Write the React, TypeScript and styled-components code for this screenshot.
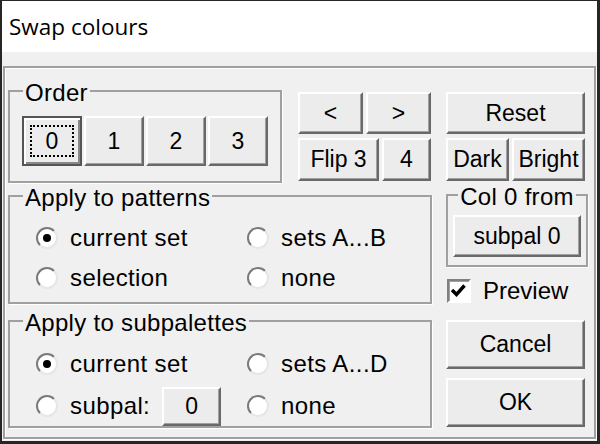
import styled, { createGlobalStyle } from "styled-components";

const GlobalStyle = createGlobalStyle`
  html, body {
    margin: 0;
    padding: 0;
  }
  body {
    width: 600px;
    height: 444px;
    overflow: hidden;
    background: #f0f0f0;
    font-family: "Liberation Sans", Arial, sans-serif;
    color: #000;
  }
`;

const Window = styled.div`
  box-sizing: border-box;
  width: 600px;
  height: 444px;
  display: flex;
  flex-direction: column;
  border-style: solid;
  border-color: #262626;
  border-width: 1px 3px 3px 2px;
  background: #f0f0f0;
`;

const TitleBar = styled.div`
  height: 51px;
  flex: none;
  display: flex;
  align-items: center;
  padding-left: 7px;
  background: #fff;
  font-family: "Open Sans", "Noto Sans", sans-serif;
  font-size: 22.5px;
`;

const Body = styled.div`
  flex: 1;
  display: flex;
  padding: 14px 1px 2px 1px;
`;

const Frame = styled.div`
  flex: 1;
  display: flex;
  gap: 14px;
  padding: 9px 0 0 3px;
  border: 2px solid #a0a0a0;
  box-shadow: 1px 1px 0 #fff, inset 1px 1px 0 #fff;
`;

const LeftCol = styled.div`
  width: 424px;
  display: flex;
  flex-direction: column;
`;

const RightCol = styled.div`
  width: 142px;
  display: flex;
  flex-direction: column;
  margin-top: 15px;
`;

const TopRow = styled.div`
  display: flex;
  align-items: flex-start;
  gap: 16px;
`;

const Group = styled.fieldset<{ $w?: number; $top?: number }>`
  box-sizing: border-box;
  width: ${(p) => (p.$w ? `${p.$w}px` : "100%")};
  min-width: 0;
  margin: ${(p) => p.$top ?? 0}px 0 0 0;
  padding: 0;
  border: 2px solid #a0a0a0;
  box-shadow: 1px 1px 0 #fff;
`;

const Legend = styled.legend<{ $center?: boolean }>`
  font-size: 24px;
  line-height: 24px;
  letter-spacing: 0.3px;
  padding: 4px 2px 0 2px;
  margin: ${(p) => (p.$center ? "0 auto" : "0 0 0 13px")};
`;

const OrderRow = styled.div`
  display: grid;
  grid-template-columns: repeat(4, 60px);
  gap: 2px;
  padding: 11px 12px 15px 12px;
`;

const NavCluster = styled.div`
  width: 133px;
  margin-top: 15px;
  display: flex;
  flex-direction: column;
  gap: 4px;
`;

const BtnRow = styled.div`
  display: flex;
  gap: 3px;
`;

const Button = styled.button<{ $w?: number; $h: number; $default?: boolean }>`
  box-sizing: border-box;
  flex: none;
  width: ${(p) => (p.$w ? `${p.$w}px` : "100%")};
  height: ${(p) => p.$h}px;
  padding: 0;
  display: flex;
  align-items: center;
  justify-content: center;
  background: #ececec;
  font-family: "Liberation Sans", Arial, sans-serif;
  font-size: 23px;
  color: #000;
  border: 2px solid;
  border-color: ${(p) =>
    p.$default ? "#555 #555 #555 #555" : "#fff #696969 #696969 #fff"};
  box-shadow: ${(p) =>
    p.$default
      ? "inset 2px 2px 0 #fff, inset -2px -2px 0 #888"
      : "inset -1px -1px 0 #a0a0a0"};
`;

const FocusRing = styled.span`
  box-sizing: border-box;
  width: 44px;
  height: 32px;
  display: flex;
  align-items: center;
  justify-content: center;
  border: 2px dotted #000;
`;

const RadioGrid = styled.div<{ $pad: string; $gap: number }>`
  display: grid;
  grid-template-columns: 211px auto;
  grid-auto-rows: 40px;
  row-gap: ${(p) => p.$gap}px;
  padding: ${(p) => p.$pad};
`;

const Option = styled.div`
  display: flex;
  align-items: center;
  gap: 12px;
  font-size: 24px;
  letter-spacing: 0.4px;
`;

const RadioCircle = styled.span<{ $on?: boolean }>`
  box-sizing: border-box;
  width: 22px;
  height: 22px;
  flex: none;
  display: flex;
  align-items: center;
  justify-content: center;
  border-radius: 50%;
  border: 2px solid;
  border-color: #7a7a7a #e6e6e6 #e6e6e6 #7a7a7a;
  background: #fff;

  &::after {
    content: "";
    width: 8px;
    height: 8px;
    border-radius: 50%;
    background: ${(p) => (p.$on ? "#000" : "transparent")};
  }
`;

const ColFromBody = styled.div`
  padding: 6px 5px 8px 5px;
`;

const CheckRow = styled.label`
  display: flex;
  align-items: center;
  gap: 12px;
  height: 26px;
  margin: 11px 0 0 1px;
  font-size: 24px;
`;

const CheckBox = styled.span`
  box-sizing: border-box;
  width: 24px;
  height: 24px;
  flex: none;
  border: 2px solid;
  border-color: #808080 #fff #fff #808080;
  box-shadow: inset 1px 1px 0 #a0a0a0;
  background: #fff;
  display: flex;
`;

const Spacer = styled.div<{ $h: number }>`
  height: ${(p) => p.$h}px;
  flex: none;
`;

const Radio = ({ label, on }: { label: string; on?: boolean }) => (
  <Option>
    <RadioCircle $on={on} />
    {label}
  </Option>
);

export default function App() {
  return (
    <>
      <GlobalStyle />
      <Window>
        <TitleBar>Swap colours</TitleBar>
        <Body>
          <Frame>
            <LeftCol>
              <TopRow>
                <Group $w={274}>
                  <Legend>Order</Legend>
                  <OrderRow>
                    <Button $h={50} $w={60} $default>
                      <FocusRing>0</FocusRing>
                    </Button>
                    <Button $h={50} $w={60}>1</Button>
                    <Button $h={50} $w={60}>2</Button>
                    <Button $h={50} $w={60}>3</Button>
                  </OrderRow>
                </Group>
                <NavCluster>
                  <BtnRow>
                    <Button $h={42} $w={65}>&lt;</Button>
                    <Button $h={42} $w={65}>&gt;</Button>
                  </BtnRow>
                  <BtnRow>
                    <Button $h={43} $w={81}>Flip 3</Button>
                    <Button $h={43} $w={49}>4</Button>
                  </BtnRow>
                </NavCluster>
              </TopRow>

              <Group $top={-1}>
                <Legend>Apply to patterns</Legend>
                <RadioGrid $pad="8px 0 4px 26px" $gap={0}>
                  <Radio label="current set" on />
                  <Radio label="sets A...B" />
                  <Radio label="selection" />
                  <Radio label="none" />
                </RadioGrid>
              </Group>

              <Group $top={3}>
                <Legend>Apply to subpalettes</Legend>
                <RadioGrid $pad="9px 0 0 26px" $gap={2}>
                  <Radio label="current set" on />
                  <Radio label="sets A...D" />
                  <Option>
                    <RadioCircle />
                    subpal:
                    <Button $h={39} $w={59}>0</Button>
                  </Option>
                  <Radio label="none" />
                </RadioGrid>
              </Group>
            </LeftCol>

            <RightCol>
              <Button $h={42} $w={139}>Reset</Button>
              <Spacer $h={4} />
              <BtnRow>
                <Button $h={43} $w={63}>Dark</Button>
                <Button $h={43} $w={73}>Bright</Button>
              </BtnRow>
              <Group>
                <Legend $center>Col 0 from</Legend>
                <ColFromBody>
                  <Button $h={42} $w={128}>subpal 0</Button>
                </ColFromBody>
              </Group>
              <CheckRow>
                <CheckBox>
                  <svg width="20" height="20" viewBox="0 0 20 20">
                    <path
                      d="M3 9 L7.5 13.5 L15.5 4.5"
                      fill="none"
                      stroke="#000"
                      strokeWidth="3.4"
                    />
                  </svg>
                </CheckBox>
                Preview
              </CheckRow>
              <Spacer $h={16} />
              <Button $h={49} $w={139}>Cancel</Button>
              <Spacer $h={9} />
              <Button $h={49} $w={139}>OK</Button>
            </RightCol>
          </Frame>
        </Body>
      </Window>
    </>
  );
}
